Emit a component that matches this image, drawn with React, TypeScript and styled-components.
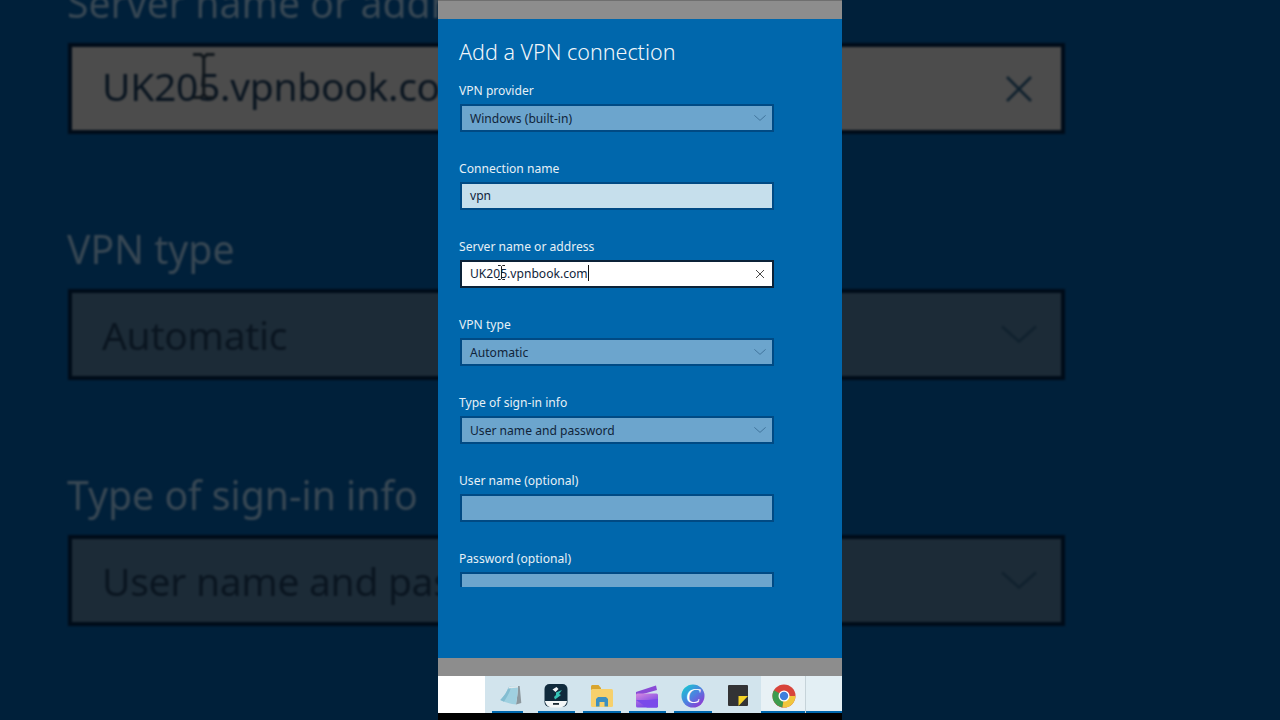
import React from "react"
import styled, { createGlobalStyle } from "styled-components"

const GlobalStyle = createGlobalStyle`
  html, body {
    margin: 0;
    padding: 0;
    background: #00203a;
  }

  * {
    box-sizing: border-box;
  }
`

const XIcon = ({ size }: { size: number }) => (
  <svg width={size} height={size} viewBox="0 0 10 10" fill="none" stroke="currentColor" strokeWidth="0.9">
    <path d="M1 1l8 8M9 1l-8 8" />
  </svg>
)

const ChevronIcon = ({ size }: { size: number }) => (
  <svg width={size} height={size * 0.52} viewBox="0 0 10 5.2" fill="none" stroke="currentColor" strokeWidth="0.7">
    <path d="M0.3 0.4L5 4.6l4.7-4.200" />
  </svg>
)

const IBeam = ({ height }: { height: number }) => (
  <svg width={height * 0.6} height={height} viewBox="0 0 9 15" fill="none" stroke="currentColor" strokeWidth="1">
    <path d="M1 .5h2.5L4.5 1.5 5.5 .5H8M4.500 1.5v12M1 14.5h2.5l1-1 1 1H8" />
  </svg>
)

const NotepadIcon = () => (
  <svg width="24" height="24" viewBox="0 0 24 24">
    <path d="M19 2h1.700L22.300 19 17 20.500C18 14 19 8 19 2z" fill="#8d989e" />
    <path d="M9.700 3L19 2c0 6-1 12-2 18.500C12 20 6 18.500 1.300 16 5 12 8 8 9.700 3z" fill="#9fd0e0" />
    <path d="M1.300 16C5 12 8 8 9.700 3l2.500-.3C11 8 8 13 5 17.800z" fill="#84bdd1" />
    <path d="M9.700 3L19 2v1.500L9.300 4.500z" fill="#e2e9ec" />
  </svg>
)

const FilmoraIcon = () => (
  <svg width="24" height="24" viewBox="0 0 24 24">
    <rect x="0.5" y="0" width="23" height="23" rx="5" fill="#102a3c" />
    <path d="M1 17h22c-.5 3.500-3 6-6.500 6.500h-9C4 23 1.500 20.500 1 17z" fill="#f2f6f7" />
    <rect x="9" y="19" width="6" height="1.800" fill="#1b2a33" />
    <path d="M8.500 5.500l4-2.500 2 2-3 3z" fill="#f2f6f7" />
    <path d="M12 8.500l6-2.500-3 4 2 1-6 4.500-1-2.500 2-2z" fill="#35c3b5" />
  </svg>
)

const FolderIcon = () => (
  <svg width="24" height="24" viewBox="0 0 24 24">
    <path d="M1 2.500c0-.8.7-1.500 1.500-1.500h6L11 4v2H1z" fill="#d9a52f" />
    <rect x="1" y="5" width="22" height="18" rx="1.500" fill="#f6d06c" />
    <path d="M6 22.500v-7.500l2-2h8l2 2v7.500h-3.500v-4.500h-5v4.500z" fill="#3c8fc0" />
  </svg>
)

const ClapperIcon = () => (
  <svg width="24" height="24" viewBox="0 0 24 24">
    <defs>
      <linearGradient id="clapper" x1="0" y1="0" x2="0.6" y2="1">
        <stop offset="0" stopColor="#d88ae0" />
        <stop offset="1" stopColor="#6a3fe6" />
      </linearGradient>
    </defs>
    <path d="M1 8l20-6.500 1 4.500-21 6z" fill="#8a4bd6" />
    <rect x="1" y="9.500" width="22" height="14" rx="1.500" fill="url(#clapper)" />
    <path d="M1 16h12l10-1v7c0 .8-.7 1.500-1.500 1.500H12z" fill="#7a4aea" />
  </svg>
)

const CanvaIcon = () => (
  <svg width="24" height="24" viewBox="0 0 24 24">
    <defs>
      <linearGradient id="canva" x1="0.1" y1="0.1" x2="0.8" y2="0.9">
        <stop offset="0" stopColor="#19c5d2" />
        <stop offset="0.55" stopColor="#4f7ee0" />
        <stop offset="1" stopColor="#8a3fd4" />
      </linearGradient>
    </defs>
    <circle cx="12" cy="12" r="11.500" fill="url(#canva)" />
    <text
      x="12"
      y="19"
      textAnchor="middle"
      fontFamily="'Liberation Serif', serif"
      fontStyle="italic"
      fontSize="22"
      fill="#fff"
    >
      C
    </text>
  </svg>
)

const StickyIcon = () => (
  <svg width="24" height="24" viewBox="0 0 24 24">
    <rect x="2" y="1" width="20" height="21" rx="1" fill="#333335" />
    <path d="M12.500 12h9.500L12.500 22z" fill="#f5d327" />
  </svg>
)

const ChromeIcon = () => (
  <svg width="24" height="24" viewBox="0 0 24 24">
    <circle cx="12" cy="12" r="11.500" fill="#d8443a" />
    <path d="M12 12L2 6.200A11.500 11.500 0 0 0 10.500 23.400z" fill="#3d9c4e" />
    <path d="M12 12h11.500A11.500 11.500 0 0 1 10.500 23.400z" fill="#f0c63c" />
    <circle cx="12" cy="12" r="5.500" fill="#fff" />
    <circle cx="12" cy="12" r="4.200" fill="#3f7fdc" />
  </svg>
)

const bigRows = [
  { label: "Server name or address", value: "UK205.vpnbook.com", focused: true },
  { label: "VPN type", value: "Automatic", focused: false },
  { label: "Type of sign-in info", value: "User name and password", focused: false },
]

const smallRows = [
  { label: "VPN provider", value: "Windows (built-in)", kind: "select" },
  { label: "Connection name", value: "vpn", kind: "filled" },
  { label: "Server name or address", value: "UK205.vpnbook.com", kind: "focused" },
  { label: "VPN type", value: "Automatic", kind: "select" },
  { label: "Type of sign-in info", value: "User name and password", kind: "select" },
  { label: "User name (optional)", value: "", kind: "empty" },
  { label: "Password (optional)", value: "", kind: "empty" },
]

const taskIcons = [
  { Icon: NotepadIcon, bar: "short" },
  { Icon: FilmoraIcon, bar: "normal" },
  { Icon: FolderIcon, bar: "normal" },
  { Icon: ClapperIcon, bar: "normal" },
  { Icon: CanvaIcon, bar: "normal" },
  { Icon: StickyIcon, bar: "none" },
  { Icon: ChromeIcon, bar: "full" },
]

export default function App() {
  return (
    <Stage>
      <GlobalStyle />
      <Backdrop>
        {bigRows.map((row) => (
          <BigGroup key={row.label}>
            <BigLabel>{row.label}</BigLabel>
            <BigField $focused={row.focused}>
              <BigValue>{row.value}</BigValue>
              {row.focused && (
                <BigBeam>
                  <IBeam height={46} />
                </BigBeam>
              )}
              <BigIcon $focused={row.focused}>{row.focused ? <XIcon size={30} /> : <ChevronIcon size={36} />}</BigIcon>
            </BigField>
          </BigGroup>
        ))}
      </Backdrop>

      <Phone>
        <GreyBar $top />
        <Panel>
          <Form>
            <Title>Add a VPN connection</Title>
            {smallRows.map((row) => (
              <Group key={row.label}>
                <Label>{row.label}</Label>
                <Field $kind={row.kind}>
                  <Value>{row.value}</Value>
                  {row.kind === "focused" && <Caret />}
                  {row.kind === "focused" && (
                    <SmallBeam>
                      <IBeam height={15} />
                    </SmallBeam>
                  )}
                  {row.kind === "focused" && (
                    <SmallIcon>
                      <XIcon size={10} />
                    </SmallIcon>
                  )}
                  {row.kind === "select" && (
                    <SmallIcon $muted>
                      <ChevronIcon size={12} />
                    </SmallIcon>
                  )}
                </Field>
              </Group>
            ))}
          </Form>
        </Panel>
        <GreyBar />
        <Taskbar>
          <WhiteGap />
          <TaskIcons>
            {taskIcons.map(({ Icon, bar }, i) => (
              <TaskButton key={i} $active={bar === "full"}>
                <Icon />
                {bar !== "none" && <Indicator $bar={bar} />}
              </TaskButton>
            ))}
          </TaskIcons>
          <TaskRest>
            <Indicator $bar="full" />
          </TaskRest>
        </Taskbar>
        <BlackStrip />
      </Phone>
    </Stage>
  )
}

const Stage = styled.div`
  position: relative;
  display: flex;
  justify-content: center;
  width: 1280px;
  height: 720px;
  overflow: hidden;
  background: #00203a;
  font-family: "Noto Sans", "Open Sans", sans-serif;
`

const Backdrop = styled.div`
  position: absolute;
  top: -24px;
  left: 72px;
  width: 989px;
  display: flex;
  flex-direction: column;
  gap: 92px;
  filter: blur(0.8px);
`

const BigGroup = styled.div`
  display: flex;
  flex-direction: column;
`

const BigLabel = styled.div`
  height: 54px;
  margin: 0 0 17px -5px;
  font-size: 39.2px;
  line-height: 54px;
  color: #384854;
`

const BigField = styled.div<{ $focused: boolean }>`
  position: relative;
  display: flex;
  align-items: center;
  justify-content: space-between;
  height: 83px;
  padding: ${({ $focused }) => ($focused ? "0 24px 6px 30px" : "0 24px 0 30px")};
  background: ${({ $focused }) => ($focused ? "#4c4c4c" : "#1c2b37")};
  box-shadow: 0 0 0 4px #000c19;
`

const BigValue = styled.span`
  font-size: 39px;
  letter-spacing: -0.3px;
  color: #0a1520;
`

const BigBeam = styled.span`
  position: absolute;
  top: 6px;
  left: 118px;
  display: flex;
  color: #12181d;
`

const BigIcon = styled.span<{ $focused: boolean }>`
  display: flex;
  margin: ${({ $focused }) => ($focused ? "6px 3px 0 0" : "0")};
  color: #10212e;
`

const Phone = styled.div`
  position: relative;
  display: flex;
  flex-direction: column;
  width: 404px;
  height: 720px;
`

const GreyBar = styled.div<{ $top?: boolean }>`
  height: ${({ $top }) => ($top ? "19px" : "18px")};
  background: #8d8d8d;
  border-top: ${({ $top }) => ($top ? "1px solid #6f6f6f" : "none")};
`

const Panel = styled.div`
  flex: 0 0 639px;
  background: #0067ac;
`

const Form = styled.div`
  display: flex;
  flex-direction: column;
  height: 568px;
  padding: 19px 0 0 21px;
  overflow: hidden;
`

const Title = styled.h1`
  margin: 0 0 16px;
  font-size: 21.5px;
  font-weight: 300;
  line-height: 28px;
  color: #f0f6fa;
`

const Group = styled.div`
  flex: 0 0 78px;
  display: flex;
  flex-direction: column;
`

const Label = styled.div`
  height: 18px;
  margin-bottom: 4px;
  font-size: 12.1px;
  line-height: 18px;
  color: #e6f0f6;
`

const fieldFill: Record<string, string> = {
  select: "#6ca5cd",
  empty: "#6ca5cd",
  filled: "#c6dfec",
  focused: "#ffffff",
}

const Field = styled.div<{ $kind: string }>`
  position: relative;
  display: flex;
  align-items: center;
  flex: 0 0 28px;
  width: 314px;
  margin-left: 1px;
  padding: ${({ $kind }) => ($kind === "select" ? "0 0 0 8px" : "0 0 2px 8px")};
  background: ${({ $kind }) => fieldFill[$kind]};
  border: 2px solid ${({ $kind }) => ($kind === "focused" ? "#0b2238" : "#004a84")};
`

const Value = styled.span`
  font-size: 12.1px;
  color: #10243a;
`

const Caret = styled.span`
  width: 1px;
  height: 16px;
  background: #111;
`

const SmallBeam = styled.span`
  position: absolute;
  top: 3px;
  left: 35px;
  display: flex;
  color: #222;
`

const SmallIcon = styled.span<{ $muted?: boolean }>`
  position: absolute;
  top: 50%;
  right: ${({ $muted }) => ($muted ? "6px" : "7.5px")};
  display: flex;
  transform: translateY(-50%);
  color: ${({ $muted }) => ($muted ? "#3a6c93" : "#333")};
`

const Taskbar = styled.div`
  display: flex;
  height: 37px;
`

const WhiteGap = styled.div`
  width: 47px;
  background: #ffffff;
`

const TaskIcons = styled.div`
  display: flex;
  flex: 0 0 320px;
  padding-left: 3px;
  overflow: hidden;
  background: #d2e4ed;
`

const TaskButton = styled.div<{ $active: boolean }>`
  position: relative;
  flex: 0 0 45.5px;
  display: flex;
  justify-content: center;
  padding-top: 8px;
  background: ${({ $active }) => ($active ? "#e8f1f5" : "transparent")};
`

const barInset: Record<string, string> = {
  short: "left: 4px; right: 11px;",
  normal: "left: 4px; right: 4px;",
  full: "left: 0; right: 0;",
}

const Indicator = styled.span<{ $bar: string }>`
  position: absolute;
  ${({ $bar }) => barInset[$bar]}
  bottom: 0;
  height: 2px;
  background: #0067ac;
`

const TaskRest = styled.div`
  position: relative;
  flex: 1;
  background: #e3eff4;
  border-left: 1px solid #c6d3d9;
`

const BlackStrip = styled.div`
  flex: 1;
  background: #000;
`
